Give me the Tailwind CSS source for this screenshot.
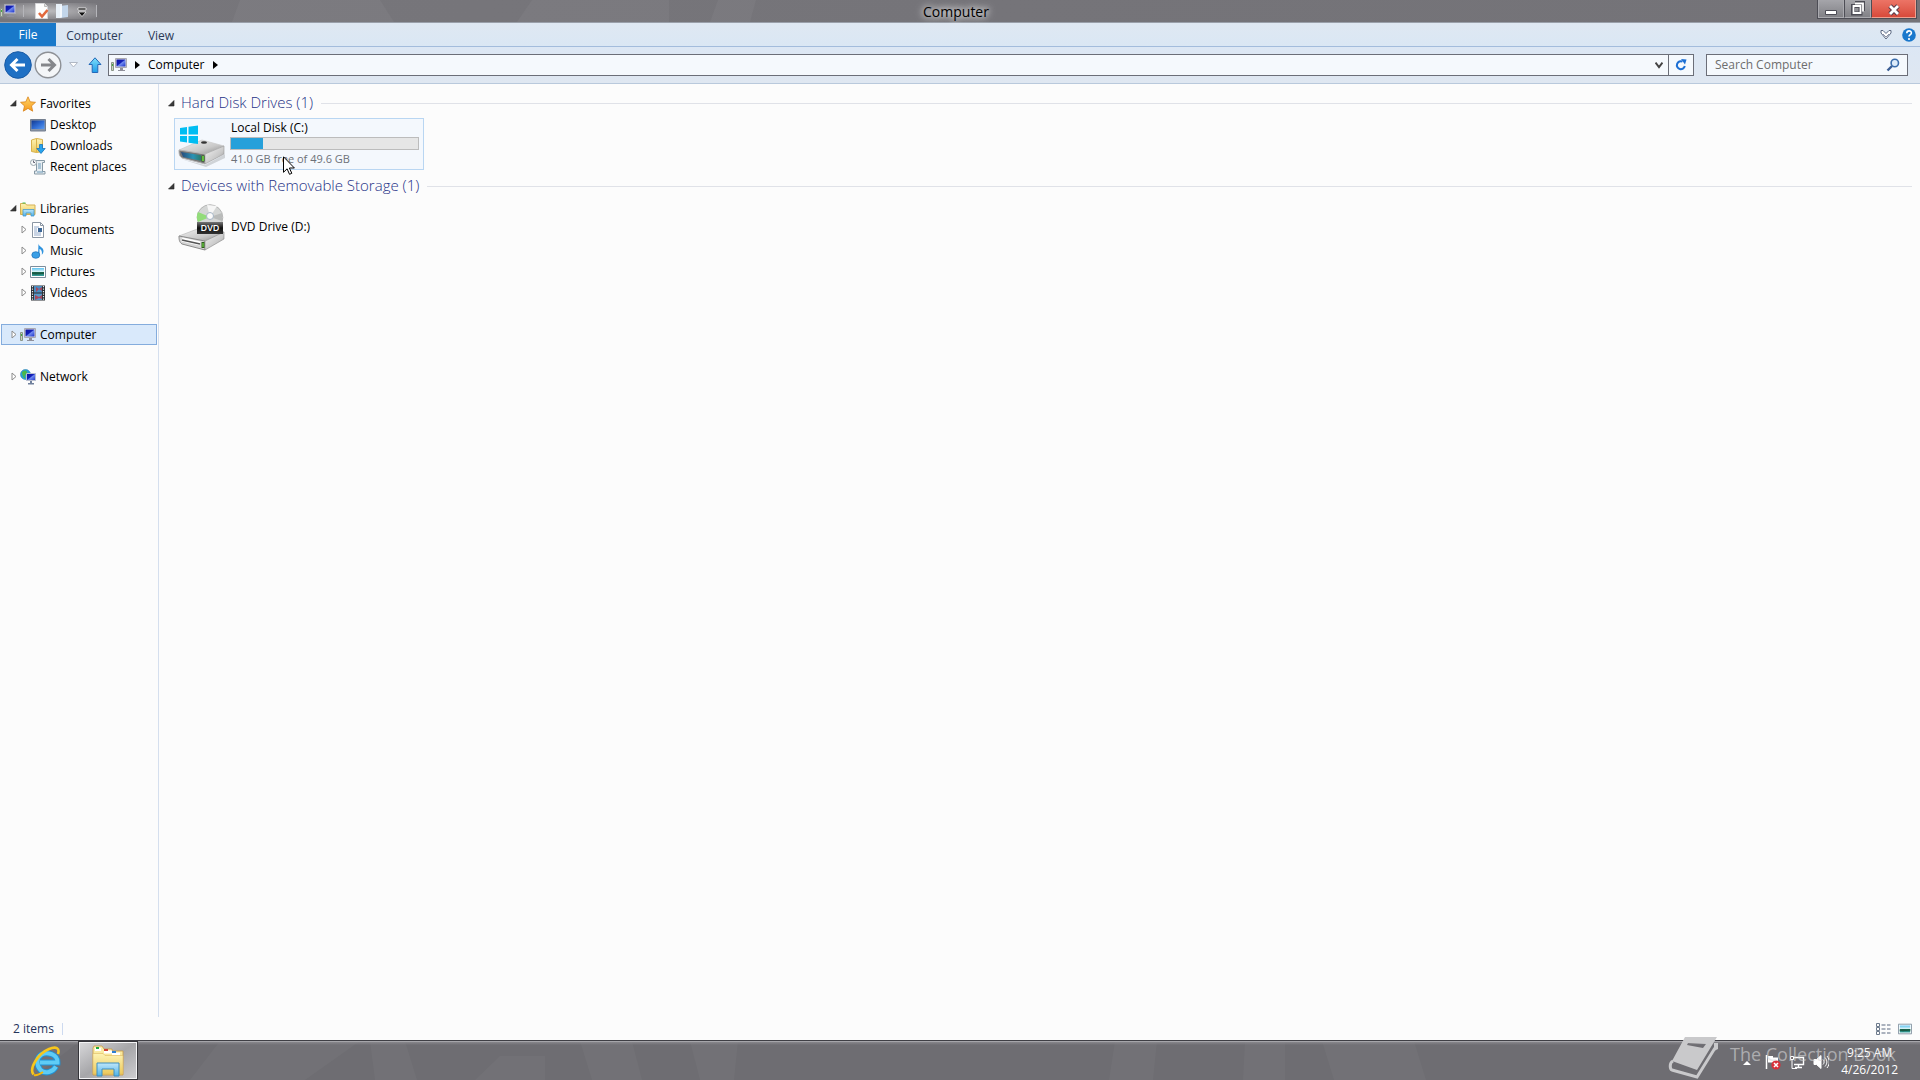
<!DOCTYPE html>
<html lang="en">
<head>
<meta charset="utf-8">
<title>Computer</title>
<script src="https://cdn.jsdelivr.net/npm/@tailwindcss/browser@4"></script>
</head>
<body class="flex h-screen flex-col overflow-hidden bg-[#fcfcfc] font-['Open_Sans','Noto_Sans',sans-serif] text-xs text-black">

<svg class="absolute h-0 w-0" aria-hidden="true">
  <defs>
    <linearGradient id="blue" x1="0" y1="0" x2="1" y2="1"><stop offset="0" stop-color="#0a12a0"/><stop offset=".45" stop-color="#1420b8"/><stop offset=".55" stop-color="#6f8af0"/><stop offset="1" stop-color="#1a30c8"/></linearGradient>
    <linearGradient id="desk" x1="0" y1="0" x2="1" y2="1"><stop offset="0" stop-color="#12398f"/><stop offset=".5" stop-color="#2c68cf"/><stop offset="1" stop-color="#5b9af0"/></linearGradient>
    <linearGradient id="gold" x1="0" y1="0" x2="0" y2="1"><stop offset="0" stop-color="#fdf3b4"/><stop offset="1" stop-color="#ecc95c"/></linearGradient>
    <linearGradient id="star" x1="0" y1="0" x2="0" y2="1"><stop offset="0" stop-color="#ffd76a"/><stop offset="1" stop-color="#f79a1c"/></linearGradient>
    <linearGradient id="metal" x1="0" y1="0" x2="1" y2="1"><stop offset="0" stop-color="#f4f4f4"/><stop offset=".6" stop-color="#c9c9c9"/><stop offset="1" stop-color="#8a8a8a"/></linearGradient>
    <linearGradient id="dark" x1="0" y1="0" x2="0" y2="1"><stop offset="0" stop-color="#777"/><stop offset=".5" stop-color="#111"/><stop offset="1" stop-color="#333"/></linearGradient>
    <linearGradient id="teal" x1="0" y1="0" x2="1" y2="0"><stop offset="0" stop-color="#274a7a"/><stop offset=".6" stop-color="#2b93b5"/><stop offset="1" stop-color="#2a7a6a"/></linearGradient>
    <linearGradient id="sky" x1="0" y1="0" x2="0" y2="1"><stop offset="0" stop-color="#bfe6fa"/><stop offset="1" stop-color="#4db2e8"/></linearGradient>
    <linearGradient id="up" x1="0" y1="0" x2="0" y2="1"><stop offset="0" stop-color="#7fe0fb"/><stop offset="1" stop-color="#1e9be8"/></linearGradient>
    <linearGradient id="landscape" x1="0" y1="0" x2="0" y2="1"><stop offset="0" stop-color="#5ec3f2"/><stop offset=".5" stop-color="#e5f8f6"/><stop offset=".55" stop-color="#1b6a50"/><stop offset="1" stop-color="#37a0a0"/></linearGradient>
    <symbol id="pc" viewBox="0 0 16 16"><path d="M4.500 1.500h11v9h-11z" fill="#d8d8dc" stroke="#a9a9b2"/><path d="M5.500 2.500h9v7h-9z" fill="url(#blue)"/><path d="M9 11h3v2h2v1H7v-1h2z" fill="#8f8f9a"/><path d="M.5 5.500h2v8h-2z" fill="#c9d3c4" stroke="#8b9586"/><path d="M1 7h1v2H1z" fill="#4a4"/></symbol>
    <symbol id="open" viewBox="0 0 7 7"><path d="M6 .5v5.500H.500z" fill="#3a3a3a" stroke="#222" stroke-width=".6"/></symbol>
    <symbol id="shut" viewBox="0 0 6 9"><path d="M1 1l4 3.500L1 8z" fill="#fff" stroke="#8c8c8c"/></symbol>
    <symbol id="picture" viewBox="0 0 16 16"><path d="M.5 2.500h15v11H.500z" fill="#fff" stroke="#7c8d9c"/><path d="M2 4h12v8H2z" fill="url(#landscape)"/><path d="M2 9c4-2 5 1 12-1v2c-5 0-8 1-12 0z" fill="#195b45"/></symbol>
  </defs>
</svg>

<header class="relative flex h-[23px] shrink-0 items-center border-b border-[#9aa0aa] bg-linear-to-r from-[#77767b] via-[#757479] to-[#747378]">
  <svg class="absolute inset-0 h-full w-full" viewBox="0 0 1920 22" preserveAspectRatio="none" fill="#fff" fill-opacity=".04" aria-hidden="true"><path d="M532 0h137v22H517zM718 0h38l-6 22h-40zM240 0h140l14 22H232z"/></svg>
  <div class="relative flex items-center bg-radial from-white/50 to-transparent">
    <svg class="h-4 w-4" aria-hidden="true"><use href="#pc"/></svg>
    <span class="ml-[7px] h-3 w-px bg-[#b5b5ba]"></span>
    <button class="ml-2.5 h-4 w-4" aria-label="Properties"><svg viewBox="0 0 16 16"><path d="M1.500.5h9l3 3v12h-12z" fill="#fdfdfd" stroke="#d5d5d8"/><path d="M10.500.5v3h3" fill="#ddd" stroke="#bbb"/><path d="M5 10l3 3.500L13.500 7" fill="none" stroke="#e2683c" stroke-width="2.600"/></svg></button>
    <button class="ml-[5px] h-4 w-4" aria-label="New folder"><svg viewBox="0 0 16 16"><path d="M1 1h6v14H1z" fill="#e8f0f8"/><path d="M5 3l8-1v12l-8 1z" fill="#c3d6ea"/><path d="M5 3l2-1v12l-2 1z" fill="#f5f9fd"/></svg></button>
    <button class="ml-[3px] h-4 w-4" aria-label="Customize Quick Access Toolbar"><svg viewBox="0 0 16 16"><path d="M4 5h8v2H4zM4 9h8L8 13.500z" fill="#111" stroke="#fff" stroke-width=".7"/></svg></button>
    <span class="ml-1.5 h-3 w-px bg-[#b5b5ba]"></span>
  </div>
  <h1 class="absolute inset-x-0 top-0 mr-2 text-center text-sm leading-6 text-shadow-[0_0_6px_#fff,0_0_10px_#fff]">Computer</h1>
  <div class="relative ml-auto mr-[3px] flex h-[19px] self-start border border-t-0 border-[#4d4d55]">
    <button class="flex w-[26px] items-center justify-center border border-t-0 border-[#aaaaaf] bg-linear-to-b from-[#a5a5aa] to-[#828287]" aria-label="Minimize"><svg class="h-4 w-4" viewBox="0 0 16 16"><path d="M2.500 9.500h11v4h-11z" fill="#fff" stroke="#4c4c55"/></svg></button>
    <button class="flex w-[27px] items-center justify-center border border-t-0 border-l-[#4d4d55] border-[#aaaaaf] bg-linear-to-b from-[#a5a5aa] to-[#828287]" aria-label="Restore"><svg class="h-4 w-4" viewBox="0 0 16 16" fill="none"><path d="M5 2h8v8M3 5h7.500v7.500H3z" stroke="#4c4c55" stroke-width="4"/><path d="M5 2.500h8v8M3.500 5h7v7h-7z" stroke="#fff" stroke-width="1.800"/></svg></button>
    <button class="flex w-[45px] items-center justify-center border border-t-0 border-[#f0a090] border-l-[#4d4d55] bg-linear-to-b from-[#ec7466] to-[#d8493a]" aria-label="Close"><svg class="h-4 w-4" viewBox="0 0 16 16" fill="none"><path d="M4 5l8 8M12 5l-8 8" stroke="#5a3a48" stroke-width="4.800"/><path d="M4 5l8 8M12 5l-8 8" stroke="#fff" stroke-width="2.800"/></svg></button>
  </div>
</header>

<nav class="flex h-6 shrink-0 items-stretch border-b border-[#a3bcdc] bg-linear-to-b from-[#dfe8f2] to-[#dae7f4] text-[#2b3a57]" aria-label="Ribbon">
  <button class="w-14 bg-[#1979ca] text-white">File</button>
  <button class="w-[77px] pt-0.5">Computer</button>
  <button class="w-14 pt-0.5">View</button>
  <button class="ml-auto mr-2.5" aria-label="Expand the Ribbon"><svg class="h-3 w-3" viewBox="0 0 12 12"><path d="M1 1.500h2l3 3 3-3h2v2.500L6 10 1 4z" fill="#fff" stroke="#5d6a83"/><path d="M3 5l3 3 3-3" fill="none" stroke="#8b93a7"/></svg></button>
  <button class="mr-1" aria-label="Help"><svg class="h-3.5 w-3.5" viewBox="0 0 14 14"><circle cx="7" cy="7" r="6.800" fill="#1a78cc"/><path d="M4.800 5.200c0-3.200 4.600-3 4.600-.3C9.400 6.500 7 6.700 7 8.600" fill="none" stroke="#fff" stroke-width="1.600"/><circle cx="7" cy="11" r="1.100" fill="#fff"/></svg></button>
</nav>

<div class="flex h-[37px] shrink-0 items-center border-b border-[#b9c9dc] bg-linear-to-b from-[#dce7f4] to-[#dfe7f1] pl-1 pr-3">
  <button aria-label="Back"><svg class="h-7 w-7" viewBox="0 0 28 28"><circle cx="14" cy="14" r="13.300" fill="#1f70c4" stroke="#1a5ba5"/><path d="M21 14H8M13.500 8L7.500 14l6 6" fill="none" stroke="#fff" stroke-width="3"/></svg></button>
  <button class="ml-0.5" aria-label="Forward"><svg class="h-7 w-7" viewBox="0 0 28 28"><circle cx="14" cy="14" r="12.800" fill="#f4f6f8" stroke="#8d9095" stroke-width="1.400"/><path d="M7 14h13M14.500 8l6 6-6 6" fill="none" stroke="#85878b" stroke-width="3"/></svg></button>
  <button class="ml-1.5" aria-label="Recent locations"><svg class="h-2 w-3" viewBox="0 0 12 8"><path d="M1.500 1.500h8L5.500 6z" fill="#fff" stroke="#b1b8c4"/></svg></button>
  <button class="ml-2" aria-label="Up"><svg class="h-4 w-[14px]" viewBox="0 0 14 16"><path d="M7 .8L13 7.500h-3.200v8H4.200v-8H1z" fill="url(#up)" stroke="#2468b8"/></svg></button>
  <div class="ml-1.5 flex h-[22px] flex-1 items-stretch border border-[#6b6e78] bg-[#f5f9fd]">
    <div class="flex flex-1 items-center pl-0.5">
      <svg class="h-4 w-4" aria-hidden="true"><use href="#pc"/></svg>
      <svg class="ml-2 h-2 w-[5px]" viewBox="0 0 5 8" aria-hidden="true"><path d="M0 0l5 4-5 4z"/></svg>
      <a href="#" class="ml-2">Computer</a>
      <svg class="ml-2 h-2 w-[5px]" viewBox="0 0 5 8" aria-hidden="true"><path d="M0 0l5 4-5 4z"/></svg>
    </div>
    <button class="w-[18px]" aria-label="Previous locations"><svg class="mx-auto h-2 w-2" viewBox="0 0 8 8"><path d="M.5 1.500L4 6l3.500-4.500" fill="none" stroke="#444" stroke-width="2"/></svg></button>
    <button class="w-[25px] border-l border-[#6b6e78]" aria-label="Refresh"><svg class="mx-auto h-3 w-3" viewBox="0 0 12 12"><path d="M7.500 2.500A4 4 0 1 0 9.800 7" fill="none" stroke="#1c6fd4" stroke-width="2"/><path d="M6 0l5.500.5L10 5.500z" fill="#1c6fd4"/></svg></button>
  </div>
  <div class="ml-3 flex h-[22px] w-[202px] items-center border border-[#6b6e78] bg-[#f5f9fd] pl-2 pr-[7px]">
    <input type="search" aria-label="Search Computer" placeholder="Search Computer" class="min-w-0 flex-1 bg-transparent outline-none placeholder:text-[#6d6d6d]">
    <svg class="h-3.5 w-3.5" viewBox="0 0 14 14" fill="none" aria-hidden="true"><path d="M1.500 12.500L6 8" stroke="#3a5e94" stroke-width="2.400"/><circle cx="8.800" cy="5" r="3.700" fill="#dcebfa" stroke="#3a6cab" stroke-width="1.600"/></svg>
  </div>
</div>

<div class="flex min-h-0 flex-1">
  <nav class="w-[159px] shrink-0 border-r border-[#d5dfee] pt-[9px] leading-[21px]" aria-label="Navigation pane">
    <ul>
      <li>
        <a href="#" class="flex h-[21px] items-center pl-2.5"><svg class="mr-[3px] h-[7px] w-[7px]"><use href="#open"/></svg><svg class="mr-1 h-4 w-4" viewBox="0 0 16 16"><path d="M8 .8l2.200 5 5.300.5-4 3.600 1.200 5.300L8 12.400l-4.700 2.800 1.200-5.300-4-3.600 5.300-.5z" fill="url(#star)" stroke="#d9841c" stroke-width=".8"/></svg>Favorites</a>
        <ul>
          <li><a href="#" class="flex h-[21px] items-center pl-[30px]"><svg class="mr-1 h-4 w-4" viewBox="0 0 16 16"><path d="M.5 2.500h15v11.500H.500z" fill="#8995a8" stroke="#747f8f"/><path d="M1.500 3.500h13V12h-13z" fill="url(#desk)"/></svg>Desktop</a></li>
          <li><a href="#" class="flex h-[21px] items-center pl-[30px]"><svg class="mr-1 h-4 w-4" viewBox="0 0 16 16"><path d="M1.500 2l5-1.500 6 1v12l-6 1-5-1z" fill="url(#gold)" stroke="#d8b24c"/><path d="M6.500.5v14" stroke="#d8b24c"/><path d="M9.500 6.500h3v4h2.700L11 15.500l-4.200-5h2.700z" fill="#28a4ee" stroke="#1673bd" stroke-width=".8"/></svg>Downloads</a></li>
          <li><a href="#" class="flex h-[21px] items-center pl-[30px]"><svg class="mr-1 h-4 w-4" viewBox="0 0 16 16"><path d="M3.500 1.500h11v2h-2v9h2.500v2.500H4.500v-3h2v-8z" fill="#e6edf2" stroke="#8799a5"/><path d="M8 5h3M8 7h3M8 9h3M7 13h6" stroke="#6d9ab8"/><circle cx="3.500" cy="3.500" r="3" fill="#f7f9fa" stroke="#9aa7ae"/><path d="M3.500 1.500v2H5" fill="none" stroke="#667"/></svg>Recent places</a></li>
        </ul>
      </li>
      <li class="mt-[21px]">
        <a href="#" class="flex h-[21px] items-center pl-2.5"><svg class="mr-[3px] h-[7px] w-[7px]"><use href="#open"/></svg><svg class="mr-1 h-4 w-4" viewBox="0 0 16 16"><path d="M.5 13.500v-11h5l1 1.500h8.500v9.500z" fill="url(#gold)" stroke="#d6b052"/><path d="M2.500 2h3" stroke="#4b5"/><path d="M3 15V8.500h11V15h-3v-3H6v3z" fill="url(#sky)" stroke="#4a9bcb" stroke-width=".8"/></svg>Libraries</a>
        <ul>
          <li><a href="#" class="flex h-[21px] items-center pl-[21px]"><svg class="mr-[3px] h-[9px] w-1.5"><use href="#shut"/></svg><svg class="mr-1 h-4 w-4" viewBox="0 0 16 16"><path d="M2.500.5h8l3 3v12h-11z" fill="#fff" stroke="#8b96a3"/><path d="M10.500.5v3h3" fill="none" stroke="#8b96a3"/><path d="M4 5h5M4 7h3M4 9h3M4 11h7M4 13h7" stroke="#93a9c9"/><path d="M8 6h4v4H8z" fill="#3c6796"/></svg>Documents</a></li>
          <li><a href="#" class="flex h-[21px] items-center pl-[21px]"><svg class="mr-[3px] h-[9px] w-1.5"><use href="#shut"/></svg><svg class="mr-1 h-4 w-4" viewBox="0 0 16 16"><path d="M8.500.5c0 3 5 3.500 5 7.500 0 1.500-.8 3-1.700 3.800C12.500 8 11 6.500 9.500 6v6.500H8z" fill="#2f93de"/><ellipse cx="5.800" cy="12" rx="4" ry="3.300" fill="#3a9fe6" stroke="#1c6fb8" stroke-width=".7"/></svg>Music</a></li>
          <li><a href="#" class="flex h-[21px] items-center pl-[21px]"><svg class="mr-[3px] h-[9px] w-1.5"><use href="#shut"/></svg><svg class="mr-1 h-4 w-4"><use href="#picture"/></svg>Pictures</a></li>
          <li><a href="#" class="flex h-[21px] items-center pl-[21px]"><svg class="mr-[3px] h-[9px] w-1.5"><use href="#shut"/></svg><svg class="mr-1 h-4 w-4" viewBox="0 0 16 16"><path d="M1 .5h14v15H1z" fill="#292d33"/><path d="M4 1h8v6.500H4z" fill="#4a8cc0"/><path d="M4 8.500h8V15H4z" fill="#5797c7"/><path d="M6 2l3 2 3-2v4L9 4 6 7zM5 10l4 2 3-2v4l-3-1-4 2z" fill="#a4485e"/><path d="M2.500 1v15M13.500 1v15" stroke="#e8ecef" stroke-width="1.200" stroke-dasharray="1.200 1.300"/></svg>Videos</a></li>
        </ul>
      </li>
      <li class="mt-[21px]"><a href="#" aria-current="page" class="mx-px flex h-[21px] items-center border border-[#84acdd] bg-[#d9e9fb] pl-[9px]"><svg class="mr-[3px] h-[9px] w-1.5"><use href="#shut"/></svg><svg class="mr-1 h-4 w-4"><use href="#pc"/></svg>Computer</a></li>
      <li class="mt-[21px]"><a href="#" class="flex h-[21px] items-center pl-[11px]"><svg class="mr-[3px] h-[9px] w-1.5"><use href="#shut"/></svg><svg class="mr-1 h-4 w-4" viewBox="0 0 16 16"><circle cx="5.500" cy="5.500" r="5" fill="#2aa0d8" stroke="#2b7fb0" stroke-width=".6"/><path d="M2 3c2-2 4-2 5 0s-3 2-2 5-3 0-3-5z" fill="#4cb848"/><path d="M6.500 4.500h9v7h-9z" fill="url(#blue)" stroke="#b9bfd0"/><path d="M10 12h2v2h2v1.500H8V14h2z" fill="#70809c"/></svg>Network</a></li>
    </ul>
  </nav>

  <main class="flex-1 pl-[9px] pr-2 pt-2">
    <section>
      <h2 class="flex h-[22px] items-center text-[15px] font-light leading-5 text-[#1f3287]"><svg class="mr-1.5 h-[7px] w-[7px]" aria-hidden="true"><use href="#open"/></svg><span class="pb-0.5">Hard Disk Drives (1)</span><span class="ml-2 h-px flex-1 bg-[#e0e2e8]"></span></h2>
      <a href="#" class="relative ml-1.5 mt-1 flex h-[52px] w-[250px] border border-[#b9d6f2] bg-[#f4f8fd] pl-[3px] pr-1">
        <svg class="mr-1 mt-1 h-12 w-12" viewBox="0 0 48 48" aria-hidden="true"><path d="M3 36l24 6 20-11v4L28 44z" fill="#000" fill-opacity=".15"/><path d="M1 27L24 17l22 6-19 8z" fill="url(#metal)" stroke="#c9c9c9" stroke-width=".7"/><path d="M1 27l26 4v10L4 35c-3-2-3-5-3-8z" fill="#777" stroke="#b5b5b5"/><path d="M3 29l20 3.200v5.600L5 34z" fill="url(#teal)"/><path d="M27 31l19-8v8L27 41z" fill="url(#metal)" stroke="#999" stroke-width=".6"/><path d="M25 32.500v6" stroke="#25521b" stroke-width="3"/><path d="M25 33v5" stroke="#7df04e" stroke-width="1.400"/><ellipse cx="26" cy="19.500" rx="3" ry="1.300" fill="#333"/><path d="M2 5l7-1v7.500H2zM10.500 3.800L20 2.500v9h-9.500zM2 13h7v6.500l-7-1zM10.500 13H20v8l-9.500-1.300z" fill="#00bdf2"/></svg>
        <div class="flex-1">
          <div class="pl-px leading-[18px]">Local Disk (C:)</div>
          <div class="h-[13px] border border-[#bcbcbc] bg-[#e6e6e6]" role="meter" aria-label="Space used" aria-valuenow="17" aria-valuemin="0" aria-valuemax="100"><div class="h-full bg-[#26a0da]" style="width:17.300%"></div></div>
          <div class="pl-px text-[11px] leading-[18px] text-[#6d7178]">41.0 GB free of 49.6 GB</div>
        </div>
        <svg class="absolute left-[108px] top-[37px] h-[19px] w-3" viewBox="0 0 12 19" aria-hidden="true"><path d="M.5.800v15.500l3.600-3.500 2.400 5.500 2.300-1-2.400-5.300h5z" fill="#fff" stroke="#000"/></svg>
      </a>
    </section>
    <section class="mt-[5px]">
      <h2 class="flex h-[22px] items-center text-[15px] font-light leading-5 text-[#1f3287]"><svg class="mr-1.5 h-[7px] w-[7px]" aria-hidden="true"><use href="#open"/></svg><span class="pb-0.5">Devices with Removable Storage (1)</span><span class="ml-2 h-px flex-1 bg-[#e0e2e8]"></span></h2>
      <a href="#" class="ml-1.5 mt-1 flex h-[52px] w-[250px] items-center border border-transparent pl-[3px]">
        <svg class="mr-[5px] h-12 w-12" viewBox="0 0 48 48" aria-hidden="true"><path d="M1 33L22 25l24 4-19 9z" fill="url(#metal)" stroke="#bbb" stroke-width=".7"/><path d="M1 33l26 5v9L4 41c-3-2-3-5-3-8z" fill="#d5d5d5" stroke="#8a8a8a"/><path d="M4 36.500l18 4" stroke="#fff" stroke-width="4"/><path d="M4 37l18 4" stroke="#555" stroke-width="1.500"/><path d="M27 38l19-9v7L27 47z" fill="url(#metal)" stroke="#888" stroke-width=".6"/><path d="M25 39v6" stroke="#2a5a1a" stroke-width="3"/><path d="M25 40v4" stroke="#7df04e"/><circle cx="32" cy="14.500" r="12.800" fill="#d4d6d5" stroke="#aaa" stroke-width=".8"/><path d="M32 14L20 9c-2 5-1 7 0 10z" fill="#92dc7a"/><path d="M32 14L29 2l10 1z" fill="#f6f6f6"/><path d="M32 14l12-4v8z" fill="#b9bbba"/><circle cx="32" cy="13" r="3.500" fill="#fafafa" stroke="#a5b5c5"/><path d="M19 19h26v12H19z" fill="url(#dark)"/><text x="32" y="28" text-anchor="middle" font-size="9" font-weight="600" fill="#fff">DVD</text></svg>
        DVD Drive (D:)
      </a>
    </section>
  </main>
</div>

<footer class="flex h-[23px] shrink-0 items-center pl-[13px] pr-2 text-[#24335a]">
  <span>2 items</span><span class="ml-2 h-3 w-px bg-[#cddaf0]"></span>
  <button class="ml-auto" aria-label="Details view"><svg class="h-3.5 w-4" viewBox="0 0 16 14" fill="none"><path d="M1.500 1.500h3v3h-3zM1.500 5.500h3v3h-3zM1.500 9.500h3v3h-3z" stroke="#6d7a8c"/><path d="M6.500 3h4M12 3h3.500M6.500 7h4M12 7h3.500M6.500 11h4M12 11h3.500" stroke="#5a6880"/></svg></button>
  <button class="ml-[7px]" aria-label="Large icons view"><svg class="h-3.5 w-3.5"><use href="#picture"/></svg></button>
</footer>

<div class="relative flex h-10 shrink-0 items-stretch border-t border-[#3f3f45] bg-[#6e6d72] text-white">
  <svg class="absolute inset-0 h-full w-full" viewBox="0 0 1920 39" preserveAspectRatio="none" fill="#fff" fill-opacity=".03" aria-hidden="true"><path d="M220 0h140L305 39H190zM370 0h35l12 39h-42zM500 15h45v24h-70zM580 0h52l10 39h-50zM690 0h48l-4 39h-34zM1115 0h42l-4 39h-44zM1245 0h40v39h-42zM1322 0h92l12 39h-92zM0 0h80L30 39H0z"/></svg>
  <div class="absolute inset-x-0 top-0 h-1 bg-linear-to-b from-[#c4c4c8] via-[#88878c] via-25% to-transparent"></div>
  <button class="relative ml-4 mr-0.5 w-[60px]" aria-label="Internet Explorer"><svg class="mx-auto h-8 w-8" viewBox="0 0 32 32" fill="none"><path d="M26 21.500C23 27 15 29.500 10.500 25s-4-12.500 1-15.500S28 9 27.500 17.500H10" stroke="#1f93d6" stroke-width="6"/><path d="M26 21.500C23 27 15 29.500 10.500 25s-4-12.500 1-15.500S28 9 27.500 17.500H10" stroke="#5fccf5" stroke-width="4"/><path d="M3.500 29.500C-1 24 7 9 19 4c7-3 11-1 9 5" stroke="#f7c61c" stroke-width="2.600"/><path d="M4 30c3 1 6-1 9-3" stroke="#f5b90c" stroke-width="2"/></svg></button>
  <button class="relative w-[60px] border border-[#35353a] bg-linear-to-br from-[#d9d9db] via-[#a6a6a9] to-[#cfcfd2] inset-ring inset-ring-[#f3f3f5]" aria-label="File Explorer"><svg class="mx-auto h-8 w-8" viewBox="0 0 32 32"><path d="M1 30V3l1-2h8l2 3h8v2h11v24z" fill="url(#gold)" stroke="#c89a45" stroke-width=".8"/><path d="M3 3h6v3H3zM12 5.500h8v3h-8zM20 7.500h8v3h-8z" fill="#fff"/><path d="M4 2h3v2H4z" fill="#1da83c"/><path d="M12 4h4v2h-4z" fill="#d04030"/><path d="M20 6h4v2h-4z" fill="#2e7fd0"/><path d="M1 8.500h10l2 2h18V29H1z" fill="url(#gold)" stroke="#dfba62" stroke-width=".6"/><path d="M5 31V18h22v13h-5v-7H10v7z" fill="url(#sky)" stroke="#3f8fc0"/></svg></button>
  <div class="relative ml-auto mr-[22px] flex items-center">
    <button aria-label="Show hidden icons"><svg class="mt-1 h-2 w-2" viewBox="0 0 8 8"><path d="M0 6l4-4 4 4z" fill="#fff"/></svg></button>
    <svg class="ml-[14px] mt-0.5 h-4 w-4" viewBox="0 0 16 16" role="img" aria-label="Action Center"><path d="M1.500 1v14" stroke="#fff" stroke-width="1.500"/><path d="M3 2h5v1.500h5v6H8V8.500H3z" fill="#fff"/><circle cx="11" cy="11" r="4.600" fill="#d9303a"/><path d="M9 9l4 4M13 9l-4 4" stroke="#fff" stroke-width="1.500"/></svg>
    <svg class="ml-2 mt-0.5 h-4 w-4" viewBox="0 0 16 16" fill="none" stroke="#fff" role="img" aria-label="Network"><path d="M5 3.500h9.500v7H5M9.500 10.500v3M6 13.500h7" stroke-width="1.400"/><path d="M1.500 2.500h3v3h-3zM3 6v8.500h5"/></svg>
    <svg class="ml-2 mt-0.5 h-4 w-4" viewBox="0 0 16 16" fill="none" stroke="#fff" role="img" aria-label="Volume"><path d="M1 5.500h2.500L8 1.500v13l-4.500-4H1z" fill="#fff"/><path d="M10 5.500c1.500 1.500 1.500 3.500 0 5M12 3.500c2.500 3 2.500 6 0 9M14 2c3 4 3 8 0 12"/></svg>
    <time class="ml-3 text-center leading-[17px]" datetime="2012-04-26T09:25">9:25 AM<br>4/26/2012</time>
  </div>
</div>

<div class="pointer-events-none absolute bottom-0 right-6 flex items-start text-[#d8d8da]/60">
  <svg class="mr-3 h-11 w-[50px]" viewBox="0 0 50 44" fill="#c9c9cb"><path fill-rule="evenodd" d="M17 1h32L29 34 4 25zM20 7l-1 2 16 3 3-4z"/><path d="M5 25C1 27 2 33 4 34l25 7L47 12" fill="none" stroke="#c9c9cb" stroke-width="3"/><path d="M46 7l4 0v6l-4 2z"/></svg>
  <span class="text-lg/9">The Collection Book</span>
</div>
</body>
</html>
